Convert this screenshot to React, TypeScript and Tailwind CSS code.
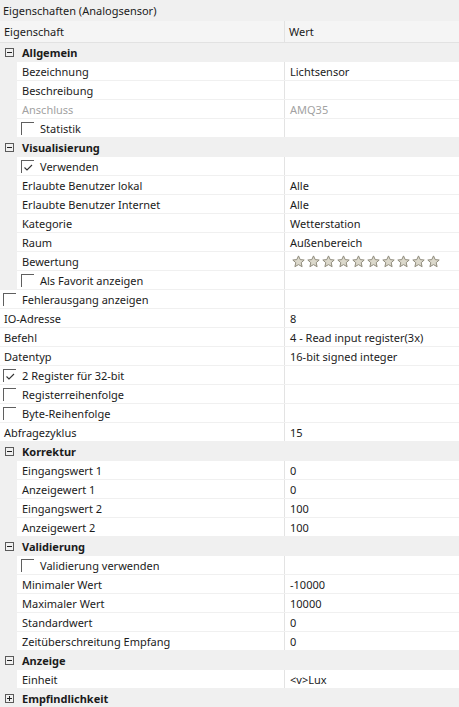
import React from "react";

type Row =
  | { kind: "cat"; label: string; open: boolean }
  | {
      kind: "prop";
      label: string;
      value?: string;
      indent?: boolean;
      disabled?: boolean;
      check?: boolean;
      stars?: boolean;
    };

const rows: Row[] = [
  { kind: "cat", label: "Allgemein", open: true },
  { kind: "prop", label: "Bezeichnung", value: "Lichtsensor", indent: true },
  { kind: "prop", label: "Beschreibung", value: "", indent: true },
  { kind: "prop", label: "Anschluss", value: "AMQ35", indent: true, disabled: true },
  { kind: "prop", label: "Statistik", indent: true, check: false },
  { kind: "cat", label: "Visualisierung", open: true },
  { kind: "prop", label: "Verwenden", indent: true, check: true },
  { kind: "prop", label: "Erlaubte Benutzer lokal", value: "Alle", indent: true },
  { kind: "prop", label: "Erlaubte Benutzer Internet", value: "Alle", indent: true },
  { kind: "prop", label: "Kategorie", value: "Wetterstation", indent: true },
  { kind: "prop", label: "Raum", value: "Außenbereich", indent: true },
  { kind: "prop", label: "Bewertung", indent: true, stars: true },
  { kind: "prop", label: "Als Favorit anzeigen", indent: true, check: false },
  { kind: "prop", label: "Fehlerausgang anzeigen", check: false },
  { kind: "prop", label: "IO-Adresse", value: "8" },
  { kind: "prop", label: "Befehl", value: "4 - Read input register(3x)" },
  { kind: "prop", label: "Datentyp", value: "16-bit signed integer" },
  { kind: "prop", label: "2 Register für 32-bit", check: true },
  { kind: "prop", label: "Registerreihenfolge", check: false },
  { kind: "prop", label: "Byte-Reihenfolge", check: false },
  { kind: "prop", label: "Abfragezyklus", value: "15" },
  { kind: "cat", label: "Korrektur", open: true },
  { kind: "prop", label: "Eingangswert 1", value: "0", indent: true },
  { kind: "prop", label: "Anzeigewert 1", value: "0", indent: true },
  { kind: "prop", label: "Eingangswert 2", value: "100", indent: true },
  { kind: "prop", label: "Anzeigewert 2", value: "100", indent: true },
  { kind: "cat", label: "Validierung", open: true },
  { kind: "prop", label: "Validierung verwenden", indent: true, check: false },
  { kind: "prop", label: "Minimaler Wert", value: "-10000", indent: true },
  { kind: "prop", label: "Maximaler Wert", value: "10000", indent: true },
  { kind: "prop", label: "Standardwert", value: "0", indent: true },
  { kind: "prop", label: "Zeitüberschreitung Empfang", value: "0", indent: true },
  { kind: "cat", label: "Anzeige", open: true },
  { kind: "prop", label: "Einheit", value: "<v>Lux", indent: true },
  { kind: "cat", label: "Empfindlichkeit", open: false },
];

function Toggle({ open }: { open: boolean }) {
  return (
    <svg width="9" height="9" viewBox="0 0 9 9" className="shrink-0">
      <rect x="0.5" y="0.5" width="8" height="8" fill="none" stroke="#5a5a5a" />
      <path d="M2 4.5h5" stroke="#222" />
      {!open && <path d="M4.5 2v5" stroke="#222" />}
    </svg>
  );
}

function Check({ on }: { on: boolean }) {
  return (
    <span className="relative block w-[13px] h-[13px] shrink-0 border-t border-l border-[#5f5f5f]">
      {on && (
        <svg width="11" height="11" viewBox="0 0 11 11" className="absolute left-[1px] top-[1px]">
          <path d="M1.5 5.5l2.5 2.5 5-5" fill="none" stroke="#333" strokeWidth="1.1" />
        </svg>
      )}
    </span>
  );
}

function Star() {
  return (
    <svg width="13" height="13" viewBox="0 0 13 13" className="shrink-0">
      <path
        d="M6.5 0.9l1.7 3.7 4 0.4-3 2.7 0.9 4-3.6-2.1-3.6 2.1 0.9-4-3-2.7 4-0.4z"
        fill="#dcd9cc"
        stroke="#8f8b7c"
        strokeWidth="1"
        strokeLinejoin="round"
      />
    </svg>
  );
}

function PropRow({ row }: { row: Extract<Row, { kind: "prop" }> }) {
  const textColor = row.disabled ? "text-[#a2a2a2]" : "text-[#1b1b1b]";
  return (
    <div className="flex h-[19px]">
      {row.indent && <div className="w-[17px] shrink-0 bg-[#f0f0f0]" />}
      <div className="flex flex-1 border-b border-[#f0f0f0] bg-white">
        <div
          className={`flex items-center w-0 flex-1 border-r border-[#e3e3e3] ${
            row.indent ? "pl-[4px]" : "pl-[3px]"
          } ${textColor}`}
        >
          {row.check !== undefined ? (
            <>
              <Check on={row.check} />
              <span className="pl-[6px] whitespace-nowrap">{row.label}</span>
            </>
          ) : (
            <span className="pl-[1px] whitespace-nowrap">{row.label}</span>
          )}
        </div>
        <div className={`flex items-center w-[174px] shrink-0 pl-[5px] ${textColor}`}>
          {row.stars ? (
            <div className="flex gap-[2px] pl-[2px]">
              {Array.from({ length: 10 }).map((_, i) => (
                <Star key={i} />
              ))}
            </div>
          ) : (
            <span className="whitespace-nowrap">{row.value}</span>
          )}
        </div>
      </div>
    </div>
  );
}

export default function App() {
  return (
    <div
      className="w-[459px] h-[707px] overflow-hidden bg-white text-[11px] leading-none"
      style={{ fontFamily: '"Noto Sans", "Open Sans", sans-serif' }}
    >
      <div className="h-[21px] bg-[#f0f0f0] flex items-center pl-[3px] text-[#1b1b1b]">
        Eigenschaften (Analogsensor)
      </div>
      <div className="h-[22px] bg-[#f5f5f5] border-b border-[#e2e2e2] flex text-[#1b1b1b]">
        <div className="w-[285px] shrink-0 border-r border-[#e2e2e2] flex items-center pl-[4px]">
          Eigenschaft
        </div>
        <div className="flex items-center pl-[4px]">Wert</div>
      </div>
      {rows.map((row, i) =>
        row.kind === "cat" ? (
          <div key={i} className="h-[19px] bg-[#f0f0f0] flex items-center text-[#1b1b1b]">
            <div className="w-[22px] shrink-0 flex pl-[5px]">
              <Toggle open={row.open} />
            </div>
            <span className="font-bold">{row.label}</span>
          </div>
        ) : (
          <PropRow key={i} row={row} />
        )
      )}
    </div>
  );
}
